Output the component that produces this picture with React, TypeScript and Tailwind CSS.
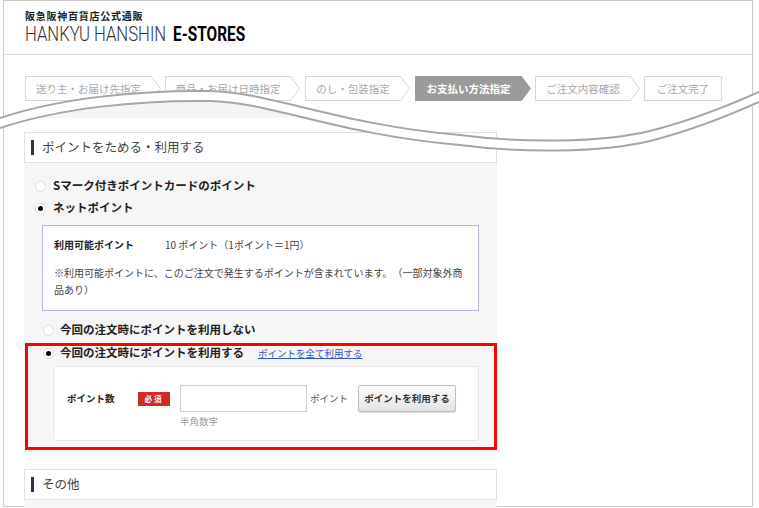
import React from 'react';

type Step = { label: string; w: number; box: string; active?: boolean; last?: boolean };

const steps: Step[] = [
  { label: '送り主・お届け先指定', w: 136, box: 'w-[136px]' },
  { label: '商品・お届け日時指定', w: 135, box: 'w-[135px] ml-[4px]' },
  { label: 'のし・包装指定', w: 105, box: 'w-[105px] ml-[5px]' },
  { label: 'お支払い方法指定', w: 116, box: 'w-[116px] ml-[5px]', active: true },
  { label: 'ご注文内容確認', w: 105, box: 'w-[105px] ml-[4px]' },
  { label: 'ご注文完了', w: 78, box: 'w-[78px] ml-[4px]', last: true },
];

function StepItem({ step }: { step: Step }) {
  const { w, active, last } = step;
  const points = last
    ? `0.5,0.5 ${w - 0.5},0.5 ${w - 0.5},24.5 0.5,24.5`
    : `0.5,0.5 ${w - 9.5},0.5 ${w - 0.5},12.5 ${w - 9.5},24.5 0.5,24.5`;
  return (
    <div className={`relative h-[25px] shrink-0 ${step.box}`}>
      <svg className="absolute inset-0" width={w} height={25} viewBox={`0 0 ${w} 25`}>
        <polygon points={points} fill={active ? '#9b9b9b' : '#fff'} stroke={active ? '#9b9b9b' : '#d6d6d6'} />
      </svg>
      <span
        className={`relative flex h-full items-center justify-center text-[10.5px] ${last ? '' : 'pr-[9px]'} ${
          active ? 'font-bold text-white' : 'text-[#a8a8a8]'
        }`}
      >
        {step.label}
      </span>
    </div>
  );
}

function Radio({ checked }: { checked?: boolean }) {
  return (
    <span className="flex h-[11px] w-[11px] shrink-0 items-center justify-center rounded-full border border-[#dedede] bg-white">
      {checked && <span className="h-[5px] w-[5px] rounded-full bg-black" />}
    </span>
  );
}

function SectionHeader({ title }: { title: string }) {
  return (
    <div className="flex h-[31px] items-center border border-[#e1e1e1] bg-white">
      <span className="ml-[6px] h-[15px] w-[3px] bg-[#333]" />
      <span className="ml-[8px] text-[12.5px] text-[#444]">{title}</span>
    </div>
  );
}

// the "torn" join between the two halves of the screenshot
function Wave() {
  const upper = 'M0,118 C60,98 140,90 210,91 C270,92 340,125 460,135 C520,143 600,143 650,131 C690,121 730,105 759,92';
  const middle = 'M0,123 C60,103 140,95 210,96 C270,97 340,130 460,140 C520,148 600,148 650,136 C690,126 730,110 759,97';
  const lower = 'M0,128 C60,108 140,100 210,101 C270,102 340,135 460,145 C520,153 600,153 650,141 C690,131 730,115 759,102';
  return (
    <svg className="pointer-events-none absolute inset-0" width={759} height={508} viewBox="0 0 759 508">
      <defs>
        <clipPath id="belowWave">
          <path d={`${lower} L759,508 L0,508 Z`} />
        </clipPath>
      </defs>
      <rect x={24} y={101} width={473} height={17} fill="#f5f5f5" clipPath="url(#belowWave)" />
      <path d={middle} fill="none" stroke="#fff" strokeWidth={11} />
      <path d={upper} fill="none" stroke="#a6a6a6" strokeWidth={2} />
      <path d={lower} fill="none" stroke="#a6a6a6" strokeWidth={2} />
    </svg>
  );
}

export default function App() {
  return (
    <div className="relative h-[508px] w-[759px] overflow-hidden bg-white text-[#333] [font-family:'Noto_Sans_CJK_JP',sans-serif]">
      <div className="ml-[3px] h-[507px] w-[750px] border border-[#c9c9c9]">
        <header className="h-[54px] border-b border-[#dedede] pl-[21px] pt-[10px]">
          <p className="text-[10px] font-bold leading-[10px] tracking-[0.75px] text-[#222]">阪急阪神百貨店公式通販</p>
          <p className="mt-[4px] flex whitespace-nowrap text-[19.5px] leading-[20px] text-[#333] [font-family:Roboto,sans-serif]">
            <span className="w-[143px] shrink-0">
              <span className="inline-block origin-left scale-x-[0.855] font-light">HANKYU HANSHIN</span>
            </span>
            <span className="ml-[5px] inline-block origin-left scale-x-[0.79] font-bold text-black">E-STORES</span>
          </p>
        </header>

        <nav className="mt-[21px] flex pl-[21px]">
          {steps.map((s) => (
            <StepItem key={s.label} step={s} />
          ))}
        </nav>

        <div className="pl-[20px]">
          <section className="mt-[31px] w-[473px]">
            <SectionHeader title="ポイントをためる・利用する" />
            <div className="bg-[#f6f6f6] pb-[5px] pt-[12px]">
              <div className="flex h-[22px] items-center pl-[11px]">
                <Radio />
                <span className="ml-[7px] text-[11.5px] font-bold text-[#222]">Sマーク付きポイントカードのポイント</span>
              </div>
              <div className="flex h-[22px] items-center pl-[11px]">
                <Radio checked />
                <span className="ml-[7px] text-[11.5px] font-bold text-[#222]">ネットポイント</span>
              </div>

              <div className="mx-[18px] mt-[6px] h-[86px] border border-[#bab2d9] bg-white pl-[11px] pt-[11px]">
                <div className="flex h-[14px] items-center text-[10px]">
                  <span className="w-[111px] font-bold text-[#222]">利用可能ポイント</span>
                  <span className="text-[#444]">10 ポイント（1ポイント＝1円）</span>
                </div>
                <p className="mt-[13px] w-[414px] text-[10px] leading-[17px] text-[#444] [text-spacing-trim:space-all]">
                  ※利用可能ポイントに、このご注文で発生するポイントが含まれています。（一部対象外商品あり）
                </p>
              </div>

              <div className="mt-[8px] flex h-[22px] items-center pl-[19px]">
                <Radio />
                <span className="ml-[6px] text-[11.5px] font-bold text-[#222]">今回の注文時にポイントを利用しない</span>
              </div>

              <div className="ml-[1px] mt-[2px] border-[3px] border-[#ff0000] pb-[6px]">
                <div className="flex h-[14px] items-center pl-[15px]">
                  <Radio checked />
                  <span className="ml-[6px] text-[11.5px] font-bold text-[#222]">今回の注文時にポイントを利用する</span>
                  <a className="ml-[14px] text-[9.5px] text-[#2f57c9] underline">ポイントを全て利用する</a>
                </div>

                <div className="ml-[25px] mr-[15px] mt-[6px] flex h-[75px] items-start rounded-[3px] border border-[#e6e6e6] bg-white pl-[13px] pt-[18px]">
                  <span className="flex h-[27px] w-[71px] items-center text-[9.5px] font-bold text-[#222]">ポイント数</span>
                  <span className="mt-[7px] flex h-[14px] w-[32px] items-center justify-center bg-[#d12a2a] text-[7.5px] font-bold tracking-[2px] text-white">
                    必須
                  </span>
                  <div className="ml-[10px] flex flex-col">
                    <input className="h-[27px] w-[127px] border border-[#cdcdcd] bg-white" />
                    <span className="mt-[2px] text-[9.5px] text-[#999]">半角数字</span>
                  </div>
                  <span className="ml-[3px] flex h-[27px] items-center text-[9.5px] text-[#555]">ポイント</span>
                  <button className="ml-[10px] h-[27px] w-[98px] rounded-[2px] border border-[#bdbdbd] bg-linear-to-b from-[#fbfbfb] to-[#e4e4e4] text-[9.5px] font-bold text-[#333] shadow-[0_1px_1px_rgba(0,0,0,0.12)]">
                    ポイントを利用する
                  </button>
                </div>
              </div>
            </div>
          </section>

          <section className="mt-[14px] w-[473px]">
            <SectionHeader title="その他" />
            <div className="h-[10px] bg-[#f6f6f6]" />
          </section>
        </div>
      </div>
      <Wave />
    </div>
  );
}
